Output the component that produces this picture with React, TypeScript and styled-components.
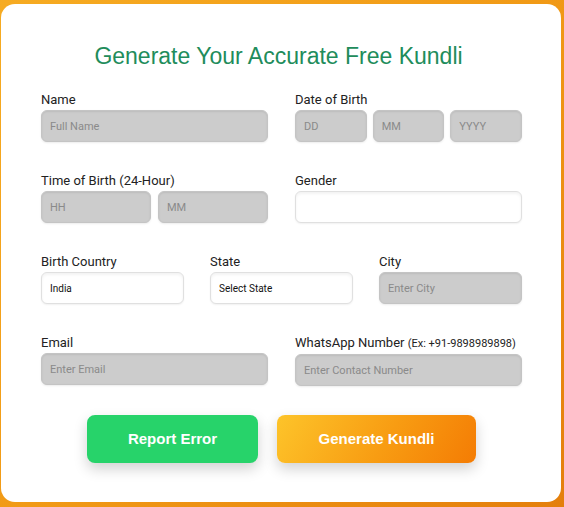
import React from "react";
import styled, { createGlobalStyle } from "styled-components";

const GlobalStyle = createGlobalStyle`
  html, body {
    margin: 0;
    padding: 0;
  }
  body {
    font-family: Roboto, "Liberation Sans", Arial, sans-serif;
  }
  * {
    box-sizing: border-box;
  }
`;

const Page = styled.div`
  width: 564px;
  height: 507px;
  padding: 4px 3px 5px 1px;
  background: linear-gradient(135deg, #f6ab22 0%, #f19a16 50%, #e47f0c 100%);
`;

const Card = styled.div`
  height: 100%;
  background: #ffffff;
  border-radius: 14px;
  padding: 39px 39px 0 40px;
`;

const Title = styled.h1`
  margin: 0 0 21px;
  padding-right: 6px;
  font-family: "Liberation Sans", Arial, sans-serif;
  font-weight: 400;
  font-size: 23px;
  line-height: 27px;
  text-align: center;
  color: #218c5b;
`;

const Form = styled.div`
  display: flex;
  flex-direction: column;
  gap: 30px;
`;

const Row = styled.div<{ cols: number }>`
  display: grid;
  grid-template-columns: repeat(${(p) => p.cols}, 1fr);
  column-gap: ${(p) => (p.cols === 3 ? 26 : 27)}px;
`;

const Field = styled.div`
  display: flex;
  flex-direction: column;
  gap: 1px;
`;

const Label = styled.label`
  font-size: 13px;
  line-height: 18px;
  color: #222222;
`;

const Hint = styled.span`
  font-size: 11px;
`;

const Group = styled.div<{ cols: number }>`
  display: grid;
  grid-template-columns: repeat(${(p) => p.cols}, 1fr);
  column-gap: ${(p) => (p.cols === 3 ? 6 : 7)}px;
`;

const Input = styled.input<{ light?: boolean }>`
  width: 100%;
  height: 32px;
  border-radius: 6px;
  padding: 0 8px;
  font-family: Roboto, "Liberation Sans", Arial, sans-serif;
  font-size: ${(p) => (p.light ? "10px" : "11px")};
  color: #111111;
  outline: none;
  background: ${(p) => (p.light ? "#ffffff" : "#cccccc")};
  border: 1px solid ${(p) => (p.light ? "#e0e0e0" : "#c4c4c4")};
  box-shadow: ${(p) =>
    p.light
      ? "inset 0 2px 3px rgba(0,0,0,0.05), 0 1px 2px rgba(0,0,0,0.06)"
      : "inset 0 1px 2px rgba(0,0,0,0.08), 0 1px 2px rgba(0,0,0,0.08)"};

  &::placeholder {
    color: #8a8a8a;
  }
`;

const Actions = styled.div`
  margin-top: 29px;
  display: flex;
  justify-content: center;
  gap: 19px;
`;

const Button = styled.button<{ variant: "green" | "orange" }>`
  height: 48px;
  width: ${(p) => (p.variant === "green" ? "171px" : "199px")};
  border: none;
  border-radius: 8px;
  color: #ffffff;
  font-family: "Liberation Sans", Arial, sans-serif;
  font-weight: 700;
  font-size: 15px;
  line-height: 46px;
  padding: 0;
  cursor: pointer;
  background: ${(p) =>
    p.variant === "green"
      ? "#27d36a"
      : "linear-gradient(120deg, #fdc42a 0%, #f89c12 55%, #f47c04 100%)"};
  box-shadow: 0 6px 14px rgba(0, 0, 0, 0.18);
`;

export default function App() {
  return (
    <Page>
      <GlobalStyle />
      <Card>
        <Title>Generate Your Accurate Free Kundli</Title>
        <Form>
          <Row cols={2}>
            <Field>
              <Label>Name</Label>
              <Input placeholder="Full Name" />
            </Field>
            <Field>
              <Label>Date of Birth</Label>
              <Group cols={3}>
                <Input placeholder="DD" />
                <Input placeholder="MM" />
                <Input placeholder="YYYY" />
              </Group>
            </Field>
          </Row>
          <Row cols={2}>
            <Field>
              <Label>Time of Birth (24-Hour)</Label>
              <Group cols={2}>
                <Input placeholder="HH" />
                <Input placeholder="MM" />
              </Group>
            </Field>
            <Field>
              <Label>Gender</Label>
              <Input light />
            </Field>
          </Row>
          <Row cols={3}>
            <Field>
              <Label>Birth Country</Label>
              <Input light defaultValue="India" />
            </Field>
            <Field>
              <Label>State</Label>
              <Input light defaultValue="Select State" />
            </Field>
            <Field>
              <Label>City</Label>
              <Input placeholder="Enter City" />
            </Field>
          </Row>
          <Row cols={2}>
            <Field>
              <Label>Email</Label>
              <Input placeholder="Enter Email" />
            </Field>
            <Field>
              <Label>
                WhatsApp Number <Hint>(Ex: +91-9898989898)</Hint>
              </Label>
              <Input placeholder="Enter Contact Number" />
            </Field>
          </Row>
        </Form>
        <Actions>
          <Button variant="green">Report Error</Button>
          <Button variant="orange">Generate Kundli</Button>
        </Actions>
      </Card>
    </Page>
  );
}
